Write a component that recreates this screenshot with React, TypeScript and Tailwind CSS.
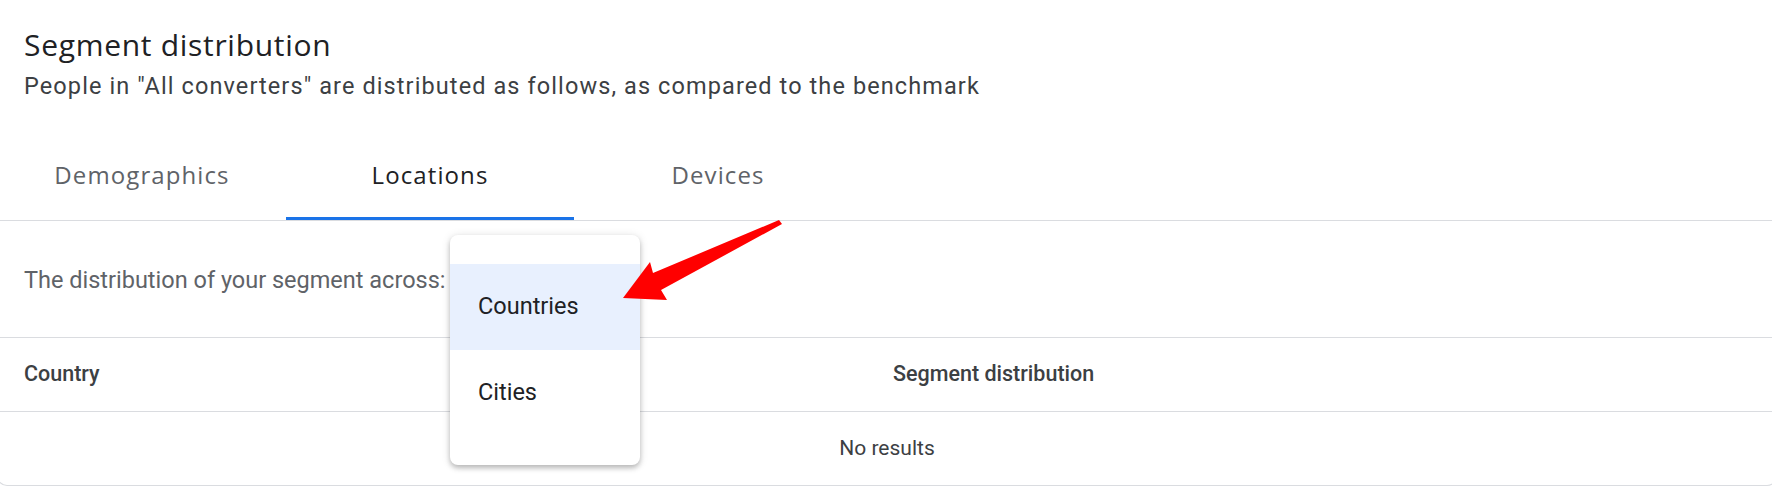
import React from "react";

const sans = { fontFamily: "'Open Sans', 'Noto Sans', sans-serif" };
const roboto = { fontFamily: "Roboto, 'Liberation Sans', sans-serif" };

function Tab({ label, active }: { label: string; active?: boolean }) {
  return (
    <div className="relative w-[288px] h-full flex items-center justify-center">
      <span
        className={
          "text-[24px] leading-[30px] font-medium tracking-[1.1px] " +
          (active ? "text-[#202124]" : "text-[#5f6368]")
        }
        style={sans}
      >
        {label}
      </span>
      {active && (
        <div className="absolute left-0 right-0 bottom-0 h-[3px] bg-[#1a73e8]" />
      )}
    </div>
  );
}

export default function App() {
  return (
    <div className="relative w-[1772px] h-[486px] overflow-hidden bg-white" style={roboto}>
      <div className="-ml-[3px] w-[1780px] h-[486px] border border-t-0 border-[#dadce0] rounded-b-[10px] flex flex-col">
        <div className="h-[130px] pl-[26px] pt-[27px]">
          <div className="text-[30px] leading-[36px] tracking-[0.7px] text-[#202124]" style={sans}>
            Segment distribution
          </div>
          <div className="mt-[9px] text-[23.5px] leading-[28px] tracking-[1.1px] text-[#3c4043]">
            People in "All converters" are distributed as follows, as compared to the benchmark
          </div>
        </div>
        <div className="h-[91px] flex border-b border-[#dadce0]">
          <Tab label="Demographics" />
          <Tab label="Locations" active />
          <Tab label="Devices" />
        </div>
        <div className="h-[116px] flex items-center pl-[26px] pt-[2px]">
          <span className="text-[23.5px] leading-[28px] text-[#5f6368]">
            The distribution of your segment across:
          </span>
        </div>
        <div className="h-[74px] border-t border-[#dadce0] flex items-center text-[21.5px] font-medium text-[#3c4043]">
          <div className="w-[895px] pl-[26px]">Country</div>
          <div>Segment distribution</div>
        </div>
        <div className="h-[74px] border-t border-[#dadce0] flex items-center justify-center text-[21px] text-[#3c4043]">
          No results
        </div>
      </div>

      <div className="absolute left-[450px] top-[235px] w-[190px] h-[230px] bg-white rounded-[8px] py-[29px] shadow-[0_3px_5px_rgba(0,0,0,0.22),0_1px_10px_rgba(0,0,0,0.12)]">
        <div className="h-[86px] bg-[#e8f0fe] flex items-center pl-[28px] text-[23.5px] text-[#202124]">
          Countries
        </div>
        <div className="h-[86px] flex items-center pl-[28px] text-[23.5px] text-[#202124]">
          Cities
        </div>
      </div>

      <svg
        className="absolute left-0 top-0 pointer-events-none"
        width="1772"
        height="486"
        viewBox="0 0 1772 486"
      >
        <polygon
          points="623,298 650,262 653,273 779,220 782,224 661,290 667,300"
          fill="#ff0000"
        />
      </svg>
    </div>
  );
}
